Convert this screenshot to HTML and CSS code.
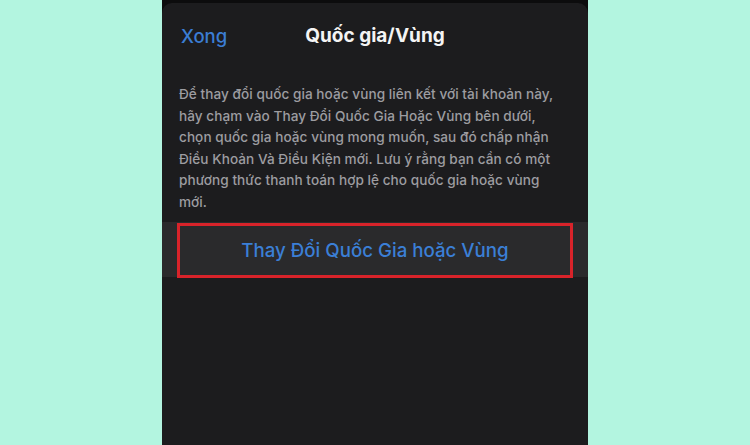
FILE: index.html
```html
<!DOCTYPE html>
<html lang="vi">
<head>
<meta charset="utf-8">
<link rel="stylesheet" href="styles.css">
</head>
<body>
<div class="phone">
  <div class="sheet">
    <div class="header">
      <span class="done">Xong</span>
      <span class="title">Quốc gia/Vùng</span>
    </div>
    <p class="desc">Để thay đổi quốc gia hoặc vùng liên kết với tài khoản này, hãy chạm vào Thay Đổi Quốc Gia Hoặc Vùng bên dưới, chọn quốc gia hoặc vùng mong muốn, sau đó chấp nhận Điều Khoản Và Điều Kiện mới. Lưu ý rằng bạn cần có một phương thức thanh toán hợp lệ cho quốc gia hoặc vùng mới.</p>
    <div class="row">
      <div class="highlight">Thay Đổi Quốc Gia hoặc Vùng</div>
    </div>
  </div>
</div>
</body>
</html>
```
FILE: styles.css
```css
html, body {
  margin: 0;
  padding: 0;
}
body {
  background: #b3f5e0;
  height: 445px;
  overflow: hidden;
  font-family: Inter, "Noto Sans", "DejaVu Sans", sans-serif;
}
.phone {
  width: 426px;
  height: 445px;
  margin: 0 auto;
  background: #0c0c0d;
  padding-top: 3px;
  box-sizing: border-box;
}
.sheet {
  height: 100%;
  background: #1c1c1e;
  border-radius: 10px 10px 0 0;
}
.header {
  position: relative;
  height: 81px;
  display: flex;
  align-items: flex-start;
  padding: 22px 0 0 19px;
  box-sizing: border-box;
}
.done {
  color: #3b7dd3;
  font-size: 18.5px;
  font-weight: 500;
  line-height: 22px;
}
.title {
  position: absolute;
  left: 0;
  right: 0;
  top: 22px;
  text-align: center;
  color: #f4f4f4;
  font-size: 19px;
  font-weight: 700;
  line-height: 22px;
  pointer-events: none;
}
.desc {
  margin: 0;
  padding: 0 17px 0 17px;
  color: #9d9da1;
  font-size: 13.6px;
  font-weight: 500;
  line-height: 21.6px;
  letter-spacing: 0.05px;
}
.row {
  margin-top: 8px;
  height: 55px;
  background: #2a2a2c;
  display: flex;
  align-items: stretch;
  padding: 1px 15px 0 15px;
  box-sizing: border-box;
}
.highlight {
  flex: 1;
  height: 55px;
  border: 3px solid #d8232a;
  box-sizing: border-box;
  display: flex;
  align-items: center;
  justify-content: center;
  color: #3b7fd6;
  font-size: 18.7px;
  font-weight: 500;
}
```
